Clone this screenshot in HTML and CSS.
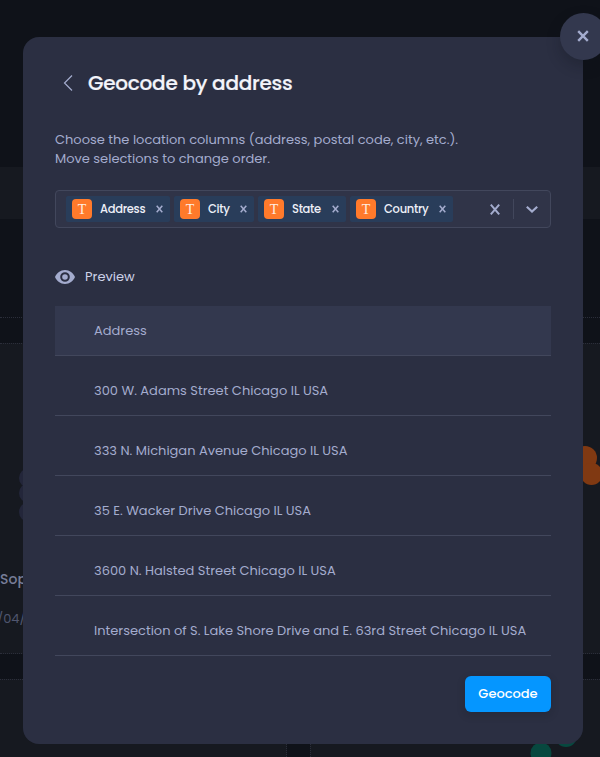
FILE: index.html
```html
<!DOCTYPE html>
<html lang="en">
<head>
<meta charset="utf-8">
<title>Geocode by address</title>
<link rel="stylesheet" href="styles.css">
</head>
<body>
<div class="backdrop">
  <div class="band"></div>
  <div class="rule"></div>
  <div class="panel">
    <svg class="dots" width="600" height="310" viewBox="0 0 600 310">
      <g fill="#23263a"><circle cx="29" cy="134" r="10"/><circle cx="29" cy="149" r="10"/><circle cx="29" cy="168" r="10"/></g>
      <g fill="#803912"><circle cx="585" cy="114" r="12"/><circle cx="591.500" cy="130" r="11"/></g>
    </svg>
    <div class="name">Sop</div>
    <div class="date">/04/</div>
  </div>
  <div class="panels"><div class="panel"></div><div class="panel"></div></div>
  <svg class="green" width="60" height="27" viewBox="0 0 60 27"><g fill="#07483f"><circle cx="16" cy="23" r="10.500"/><circle cx="41" cy="6" r="11"/></g></svg>
</div>

<main class="modal">
  <button class="close" aria-label="Close"><svg width="12" height="12" viewBox="0 0 12 12"><path d="M1.200 1.200l9.600 9.600M10.800 1.200l-9.600 9.600"/></svg></button>
  <header class="head">
    <svg class="back" width="10" height="16" viewBox="0 0 10 16"><path d="M9 .5L1.500 8 9 15.500"/></svg>
    <h1>Geocode by address</h1>
  </header>
  <p class="desc">Choose the location columns (address, postal code, city, etc.).<br>Move selections to change order.</p>
  <div class="select">
    <div class="chip chip-address"><span class="type">T</span>Address<svg class="x" width="7" height="8" viewBox="0 0 7 8"><path d="M.7.7l5.600 6.600M6.300.7L.7 7.300"/></svg></div>
    <div class="chip chip-city"><span class="type">T</span>City<svg class="x" width="7" height="8" viewBox="0 0 7 8"><path d="M.7.7l5.600 6.600M6.300.7L.7 7.300"/></svg></div>
    <div class="chip chip-state"><span class="type">T</span>State<svg class="x" width="7" height="8" viewBox="0 0 7 8"><path d="M.7.7l5.600 6.600M6.300.7L.7 7.300"/></svg></div>
    <div class="chip chip-country"><span class="type">T</span>Country<svg class="x" width="7" height="8" viewBox="0 0 7 8"><path d="M.7.7l5.600 6.600M6.300.7L.7 7.300"/></svg></div>
    <svg class="clear" width="10" height="11" viewBox="0 0 10 11"><path d="M.8.7l8.400 9.600M9.200.7L.8 10.300"/></svg>
    <span class="sep"></span>
    <svg class="down" width="12" height="8" viewBox="0 0 12 8"><path d="M.8 1.800L6 6.500l5.200-4.700"/></svg>
  </div>
  <div class="preview">
    <svg width="20" height="14" viewBox="0 0 20 14"><path fill-rule="evenodd" d="M10 0C5.500 0 1.700 2.900 0 7c1.700 4.100 5.500 7 10 7s8.300-2.900 10-7c-1.700-4.100-5.500-7-10-7zm0 11.800a4.800 4.800 0 1 1 0-9.600 4.800 4.800 0 0 1 0 9.600zM10 4.200a2.800 2.800 0 1 0 0 5.600 2.800 2.800 0 0 0 0-5.600z"/></svg>
    <span>Preview</span>
  </div>
  <div class="table">
    <div class="row th">Address</div>
    <div class="row">300 W. Adams Street Chicago IL USA</div>
    <div class="row">333 N. Michigan Avenue Chicago IL USA</div>
    <div class="row">35 E. Wacker Drive Chicago IL USA</div>
    <div class="row">3600 N. Halsted Street Chicago IL USA</div>
    <div class="row">Intersection of S. Lake Shore Drive and E. 63rd Street Chicago IL USA</div>
  </div>
  <button class="submit">Geocode</button>
</main>
</body>
</html>
```

FILE: styles.css
```css
* { box-sizing: border-box; }
body { margin: 0; width: 600px; height: 757px; overflow: hidden; position: relative; background: #0f1219; font-family: Poppins, Inter, sans-serif; font-size: 13px; color: #a4acce; }
button { border: 0; padding: 0; font: inherit; }
svg { display: block; flex: none; }
svg path { fill: none; stroke: #a4acce; }
.backdrop { position: absolute; inset: 0; overflow: hidden; padding-top: 167px; }
.band { height: 52px; background: #161920; }
.rule { height: 99px; border-bottom: 1px dotted #2b2e3a; margin-bottom: 25px; }
.panel { position: relative; height: 311px; background: #161920; border: 1px dotted #2b2e3a; border-left: 0; border-right: 0; overflow: hidden; }
.dots { position: absolute; left: 0; top: 0; }
.name { position: absolute; left: 0; top: 226px; font-size: 14px; line-height: 18px; font-weight: 500; color: #777d98; }
.date { position: absolute; left: -3px; top: 266px; line-height: 18px; color: #50566f; }
.panels { display: grid; grid-template-columns: 287px 290px; gap: 23px; margin-top: 25px; }
.panels .panel { height: 90px; border: 1px dotted #2b2e3a; }
.panels .panel:first-child { border-left: 0; }
.panels .panel:last-child { border-right: 0; }
.green { position: absolute; left: 525px; top: 730px; }
.modal { position: absolute; left: 23px; top: 37px; width: 560px; height: 707px; padding: 32px; border-radius: 16px; background: #2b2f42; display: flex; flex-direction: column; }
.close { position: absolute; left: 537px; top: -24px; width: 47px; height: 47px; border-radius: 50%; background: #33384e; display: flex; align-items: center; padding: 0 0 2px 17px; box-shadow: 0 6px 14px rgba(15,18,25,.28); }
.close path { stroke-width: 2.400; }
.head { display: flex; align-items: center; height: 28px; padding-left: 8px; gap: 15px; }
h1 { margin: 0; font-size: 20px; font-weight: 500; letter-spacing: -.25px; line-height: 28px; color: #f3f4fa; white-space: nowrap; -webkit-text-stroke: .2px #f3f4fa; }
.back path { stroke-width: 1.200; }
.desc { margin: 33px 0 0; line-height: 19px; white-space: nowrap; }
.select { display: flex; align-items: center; width: 496px; height: 38px; margin-top: 22px; padding-left: 10px; border: 1px solid #42475c; border-radius: 4px; background: #303448; }
.chip { display: flex; align-items: center; height: 26px; padding: 0 7.500px 0 6px; margin-right: 4px; border-radius: 2px; background: #293d5a; color: #eef0f8; font-size: 11.500px; letter-spacing: -.3px; font-weight: 500; white-space: nowrap; }
.chip-address { width: 104px; }
.chip-city { width: 80px; }
.chip-state { width: 88px; }
.chip-country { width: 103px; }
.type { width: 20px; height: 20px; margin-right: 8px; border-radius: 4px; background: #ff7a2b; color: #ffeee2; font: 14px/21px "Liberation Serif", serif; letter-spacing: 0; text-align: center; }
.x { margin-left: auto; }
.x path { stroke-width: 1.500; }
.clear { margin-left: auto; margin-right: 13px; }
.clear path { stroke-width: 2; }
.sep { width: 1px; height: 20px; background: #42475c; margin-right: 12px; }
.down { margin-right: 12px; }
.down path { stroke-width: 2.200; }
.preview { display: flex; align-items: center; gap: 10px; height: 20px; margin-top: 39px; color: #cdd2e8; }
.preview path { fill: #a4acce; stroke: none; }
.table { margin-top: 19px; width: 496px; }
.row { display: flex; align-items: center; height: 60px; padding: 10px 0 0 39px; border-bottom: 1px solid #42475c; white-space: nowrap; }
.th { height: 50px; padding-top: 0; background: #33384e; }
.submit { align-self: flex-end; width: 86px; height: 36px; margin-top: 20px; border-radius: 6px; background: #0596ff; color: #fff; font-weight: 500; box-shadow: 0 3px 8px rgba(15,18,25,.2); }
```
